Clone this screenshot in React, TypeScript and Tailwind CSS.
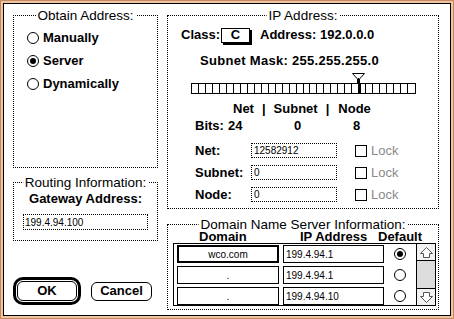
import React from "react";

const ui = "font-['Liberation_Sans',Arial,sans-serif]";

function Radio({ on }: { on?: boolean }) {
    return (
        <span className="flex h-[12px] w-[12px] shrink-0 items-center justify-center rounded-full border border-black bg-white">
            {on && <span className="h-[6px] w-[6px] rounded-full bg-black" />}
        </span>
    );
}

function Group({
    title,
    className,
    children,
}: {
    title: string;
    className?: string;
    children?: React.ReactNode;
}) {
    return (
        <div className={`relative border border-dotted border-black ${className ?? ""}`}>
            <span className="absolute left-1/2 top-[-7px] -translate-x-1/2 whitespace-nowrap bg-white px-[2px] text-[13.5px] leading-[13px]">
                {title}
            </span>
            {children}
        </div>
    );
}

function Field({ label, value }: { label: string; value: string }) {
    return (
        <div className="flex h-[15px] items-center pl-[27px]">
            <span className="w-[56px] text-[13px] font-bold">{label}</span>
            <div className="flex h-[15px] w-[86px] items-center border border-dotted border-black pl-[2px] text-[10px]">
                {value}
            </div>
            <span className="ml-[18px] h-[12px] w-[12px] border border-black" />
            <span className="ml-[4px] text-[13px] text-[#8a8a8a]">Lock</span>
        </div>
    );
}

function ArrowBox({ down }: { down?: boolean }) {
    return (
        <div
            className={`flex h-[17px] items-center justify-center bg-[#f2f2f2] ${
                down ? "border-t border-black" : "border-b border-black"
            }`}
        >
            <svg width="13" height="11" viewBox="0 0 13 11" className={down ? "rotate-180" : ""}>
                <path
                    d="M6.5 0.5 L12.5 6.5 H9.5 V10.5 H3.5 V6.5 H0.5 Z"
                    fill="#ffffff"
                    stroke="#555"
                    strokeWidth="1"
                />
            </svg>
        </div>
    );
}

const servers = [
    { domain: "wco.com", ip: "199.4.94.1", on: true },
    { domain: ".", ip: "199.4.94.1", on: false },
    { domain: ".", ip: "199.4.94.10", on: false },
];

export default function App() {
    return (
        <div className={`h-[319px] w-[454px] bg-[#c28a66] p-px text-black ${ui}`}>
            <div className="h-full w-full bg-[#f2c49c] p-[2px]">
                <div className="flex h-full w-full gap-[9px] border border-black bg-white pl-[9px] pt-[11px]">
                    {/* left column */}
                    <div className="flex w-[145px] flex-col">
                        <Group title="Obtain Address:" className="h-[153px] pl-[13px] pt-[10px]">
                            {[
                                ["Manually", false],
                                ["Server", true],
                                ["Dynamically", false],
                            ].map(([label, on]) => (
                                <div key={label as string} className="flex h-[23px] items-center gap-[4px]">
                                    <Radio on={on as boolean} />
                                    <span className="text-[13px] font-bold">{label}</span>
                                </div>
                            ))}
                        </Group>

                        <Group title="Routing Information:" className="mt-[14px] h-[59px] pt-[7px]">
                            <div className="flex h-[17px] items-center justify-center text-[13px] font-bold">
                                Gateway Address:
                            </div>
                            <div className="ml-[9px] mt-[7px] flex h-[16px] w-[125px] items-center border border-dotted border-black pl-[1px] text-[10px]">
                                199.4.94.100
                            </div>
                        </Group>

                        <div className="mt-[36px] flex items-center gap-[10px]">
                            <div className="h-[28px] w-[68px] rounded-[10px] border-[3px] border-black p-px">
                                <div className="flex h-full w-full items-center justify-center rounded-[6px] border border-black text-[13px] font-bold">
                                    OK
                                </div>
                            </div>
                            <div className="flex h-[19px] w-[61px] items-center justify-center rounded-[6px] border border-black text-[13px] font-bold">
                                Cancel
                            </div>
                        </div>
                    </div>

                    {/* right column */}
                    <div className="flex w-[272px] flex-col">
                        <Group title="IP Address:" className="flex h-[194px] flex-col">
                            <div className="mt-[10px] flex h-[18px] items-center pl-[13px] text-[13px] font-bold">
                                <span>Class:</span>
                                <span className="ml-[1px] flex h-[15px] w-[29px] items-center justify-center border border-black shadow-[2px_2px_0_#000]">
                                    C
                                </span>
                                <span className="ml-[10px]">Address: 192.0.0.0</span>
                            </div>
                            <div className="mt-[8px] flex h-[18px] items-center pl-[32px] text-[13px] font-bold tracking-[0.3px]">
                                Subnet Mask: 255.255.255.0
                            </div>

                            <div className="relative ml-[23px] mt-[3px]">
                                <svg width="13" height="10" viewBox="0 0 13 10" className="ml-[161px] block">
                                    <path d="M0.5 0.5 H12.5 M0.5 0.5 L5.5 6 M12.5 0.5 L7.5 6 M6.5 5 V10" stroke="#000" strokeWidth="1" fill="none" />
                                    <rect x="5" y="6" width="3" height="4" fill="#000" />
                                </svg>
                                <div className="flex h-[11px] w-[225px] border border-black">
                                    {Array.from({ length: 32 }).map((_, i) => (
                                        <span key={i} className={`h-full w-[7px] ${i < 31 ? "border-r border-black" : ""}`} />
                                    ))}
                                </div>
                                <span className="absolute left-[167px] top-[10px] h-[11px] w-[3px] bg-black" />
                            </div>

                            <div className="mt-[7px] flex h-[16px] items-center text-[13px] font-bold">
                                <span className="ml-[65px]">Net</span>
                                <span className="ml-[8px]">|</span>
                                <span className="ml-[8px]">Subnet</span>
                                <span className="ml-[8px]">|</span>
                                <span className="ml-[9px]">Node</span>
                            </div>
                            <div className="mt-px flex h-[16px] items-center text-[13px] font-bold">
                                <span className="ml-[27px] w-[33px]">Bits:</span>
                                <span className="w-[66px]">24</span>
                                <span className="w-[59px]">0</span>
                                <span>8</span>
                            </div>

                            <div className="mt-[9px] flex flex-col gap-[7px]">
                                <Field label="Net:" value="12582912" />
                                <Field label="Subnet:" value="0" />
                                <Field label="Node:" value="0" />
                            </div>
                        </Group>

                        <Group title="Domain Name Server Information:" className="mt-[15px] flex h-[86px] flex-col">
                            <div className="mt-[6px] grid h-[12px] grid-cols-[101px_78px_auto] items-center pl-[31px] text-[13px] font-bold leading-[12px]">
                                <span>Domain</span>
                                <span>IP Address</span>
                                <span>Default</span>
                            </div>
                            <div className="ml-[5px] flex h-[63px] w-[263px] border border-black">
                                <div className="flex flex-col gap-[3px] pl-[3px] pt-px">
                                    {servers.map((s, i) => (
                                        <div key={i} className="flex h-[18px] items-center">
                                            <div
                                                className={`flex h-full w-[102px] items-center justify-center border-black text-[10px] ${
                                                    i === 0 ? "border-2" : "border"
                                                }`}
                                            >
                                                {s.domain}
                                            </div>
                                            <div className="ml-[4px] flex h-full w-[101px] items-center border border-black pl-[2px] text-[10px]">
                                                {s.ip}
                                            </div>
                                            <div className="flex w-[32px] justify-center">
                                                <Radio on={s.on} />
                                            </div>
                                        </div>
                                    ))}
                                </div>
                                <div className="flex w-[19px] flex-col justify-between border-l border-black bg-[#dcdcdc]">
                                    <ArrowBox />
                                    <ArrowBox down />
                                </div>
                            </div>
                        </Group>
                    </div>
                </div>
            </div>
        </div>
    );
}
